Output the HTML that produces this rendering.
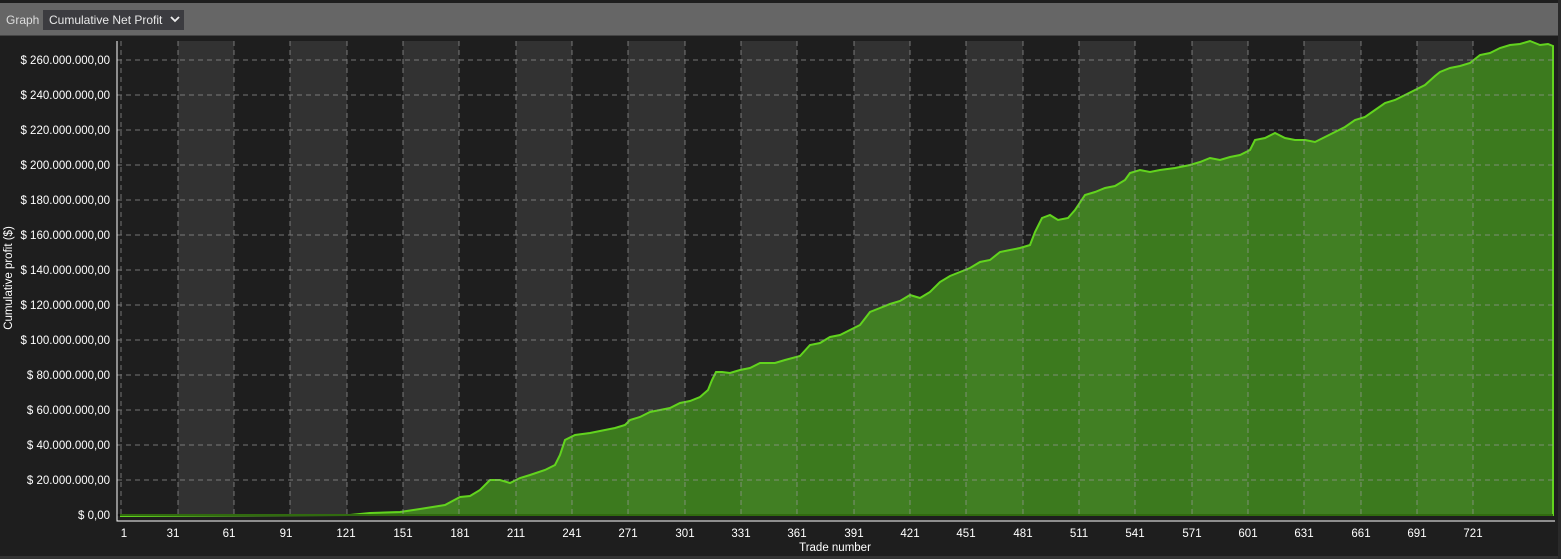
<!DOCTYPE html><html><head><style>
body{margin:0;width:1561px;height:559px;background:#1e1e1e;overflow:hidden;font-family:"Liberation Sans",sans-serif;}
</style></head><body>
<svg width="1561" height="559" style="position:absolute;left:0;top:0" font-family="Liberation Sans, sans-serif">
<rect x="0" y="0" width="1561" height="559" fill="#1e1e1e"/>
<rect x="0" y="3" width="1558" height="33" fill="#666"/>
<rect x="0" y="35" width="1558" height="1" fill="#444"/>
<text x="6" y="24" font-size="12" fill="#ddd">Graph</text>
<rect x="43" y="10" width="141" height="20" fill="#3c3c40"/>
<text x="49" y="24" font-size="12" fill="#e8e8e8">Cumulative Net Profit</text>
<path d="M171 17l4 4 4-4" stroke="#eee" stroke-width="1.8" fill="none"/>
<g fill="#323232">
<rect x="178" y="41" width="56" height="474"/><rect x="290" y="41" width="57" height="474"/><rect x="403" y="41" width="56" height="474"/><rect x="516" y="41" width="56" height="474"/><rect x="628" y="41" width="57" height="474"/><rect x="741" y="41" width="56" height="474"/><rect x="854" y="41" width="56" height="474"/><rect x="966" y="41" width="57" height="474"/><rect x="1079" y="41" width="56" height="474"/><rect x="1192" y="41" width="56" height="474"/><rect x="1304" y="41" width="57" height="474"/><rect x="1417" y="41" width="56" height="474"/>
</g>
<polygon fill="rgba(71,153,31,0.75)" stroke="#62d41e" stroke-width="2" points="121,516 350,515 370,513 400,512 420,509 445,505 460,497 470,496 480,490 490,480 500,480 510,483 520,478 530,475 545,470 555,465 560,455 565,440 575,435 590,433 605,430 615,428 625,425 630,420 640,417 650,412 660,410 670,408 680,403 690,401 700,397 708,390 712,380 716,372 722,372 730,373 740,370 750,368 760,363 775,363 785,360 800,356 810,345 820,343 830,337 840,335 850,330 860,325 870,312 880,308 890,304 900,301 910,295 920,298 930,292 940,282 950,276 960,272 970,268 980,262 990,260 1000,252 1010,250 1020,248 1030,245 1035,232 1042,218 1050,215 1058,220 1068,218 1075,210 1085,195 1095,192 1105,188 1115,186 1125,180 1130,173 1140,170 1150,172 1160,170 1175,168 1190,165 1200,162 1210,158 1220,160 1230,157 1240,155 1250,150 1255,140 1265,138 1275,133 1285,138 1295,140 1305,140 1315,142 1325,137 1335,132 1345,127 1355,120 1365,117 1375,110 1385,103 1395,100 1405,95 1415,90 1425,85 1435,76 1440,72 1450,68 1460,66 1470,63 1480,55 1490,53 1500,48 1510,45 1520,44 1530,41 1540,45 1548,44 1553,46 1553,515 121,515"/>
<g stroke="#999" stroke-dasharray="5,4" stroke-width="1" opacity="0.7">
<path d="M121 41V515M178 41V515M234 41V515M290 41V515M347 41V515M403 41V515M459 41V515M516 41V515M572 41V515M628 41V515M685 41V515M741 41V515M797 41V515M854 41V515M910 41V515M966 41V515M1023 41V515M1079 41V515M1135 41V515M1192 41V515M1248 41V515M1304 41V515M1361 41V515M1417 41V515M1473 41V515"/>
<path d="M117 60H1553M117 95H1553M117 130H1553M117 165H1553M117 200H1553M117 235H1553M117 270H1553M117 305H1553M117 340H1553M117 375H1553M117 410H1553M117 445H1553M117 480H1553"/>
</g>
<path d="M117 515H1553" stroke="#000" stroke-width="1"/>
<path d="M117 41V521H1555" stroke="#fff" stroke-width="1" fill="none"/>
<g font-size="11.5" fill="#fff" text-anchor="end">
<text x="110" y="64">$ 260.000.000,00</text><text x="110" y="99">$ 240.000.000,00</text><text x="110" y="134">$ 220.000.000,00</text><text x="110" y="169">$ 200.000.000,00</text><text x="110" y="204">$ 180.000.000,00</text><text x="110" y="239">$ 160.000.000,00</text><text x="110" y="274">$ 140.000.000,00</text><text x="110" y="309">$ 120.000.000,00</text><text x="110" y="344">$ 100.000.000,00</text><text x="110" y="379">$ 80.000.000,00</text><text x="110" y="414">$ 60.000.000,00</text><text x="110" y="449">$ 40.000.000,00</text><text x="110" y="484">$ 20.000.000,00</text><text x="110" y="519">$ 0,00</text>
</g>
<g font-size="11.5" fill="#fff" text-anchor="middle">
<text x="124" y="537">1</text><text x="173" y="537">31</text><text x="229" y="537">61</text><text x="286" y="537">91</text><text x="346" y="537">121</text><text x="403" y="537">151</text><text x="460" y="537">181</text><text x="516" y="537">211</text><text x="572" y="537">241</text><text x="628" y="537">271</text><text x="685" y="537">301</text><text x="741" y="537">331</text><text x="797" y="537">361</text><text x="854" y="537">391</text><text x="910" y="537">421</text><text x="966" y="537">451</text><text x="1023" y="537">481</text><text x="1079" y="537">511</text><text x="1135" y="537">541</text><text x="1192" y="537">571</text><text x="1248" y="537">601</text><text x="1304" y="537">631</text><text x="1361" y="537">661</text><text x="1417" y="537">691</text><text x="1473" y="537">721</text>
<text x="835" y="551">Trade number</text>
<text transform="translate(12,278) rotate(-90)">Cumulative profit ($)</text>
</g>
<rect x="0" y="556" width="1561" height="3" fill="#333"/>
<rect x="1558" y="0" width="3" height="559" fill="#2a2a2a"/>
</svg>
</body></html>
